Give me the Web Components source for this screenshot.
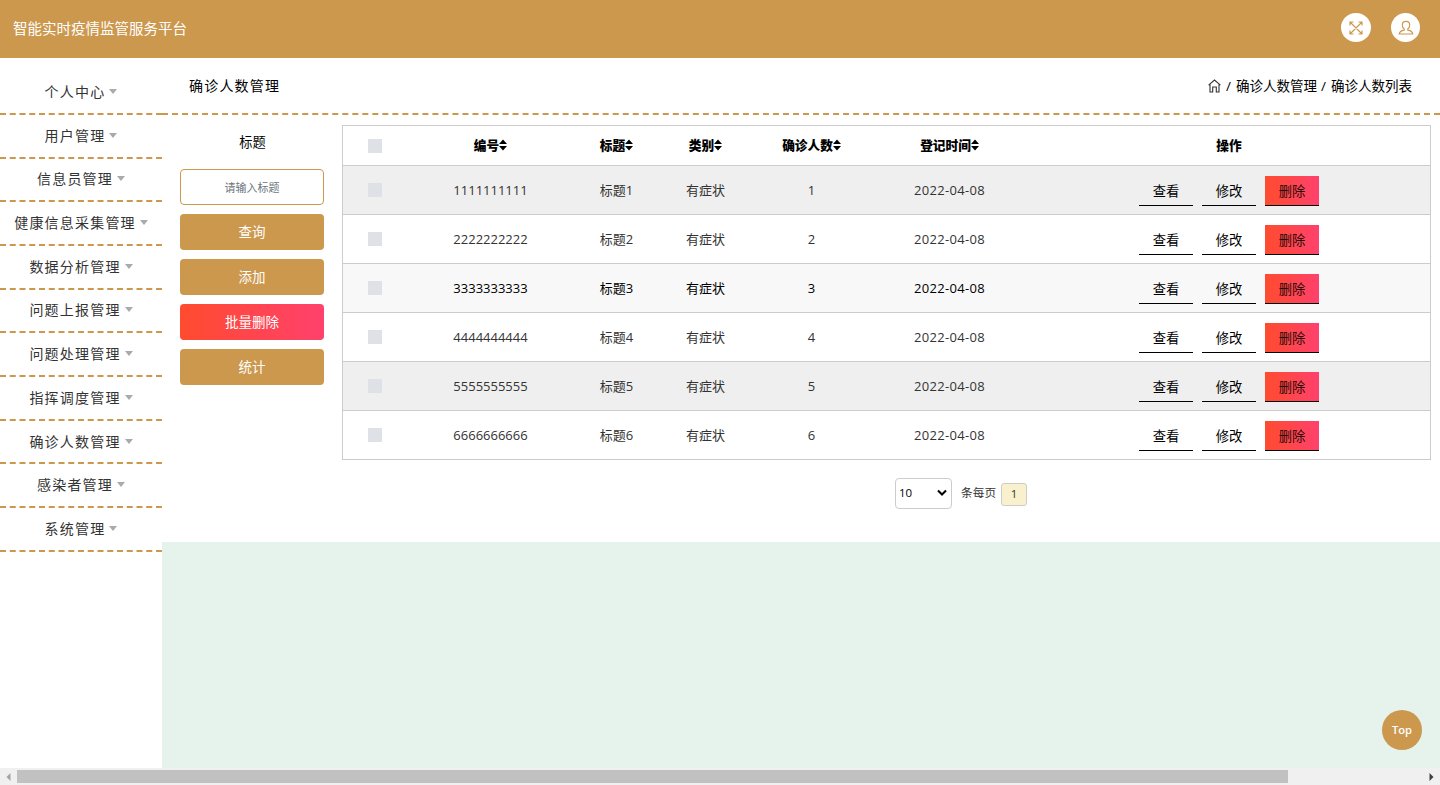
<!DOCTYPE html>
<html lang="zh-CN">
<head>
<meta charset="utf-8">
<title>智能实时疫情监管服务平台</title>
<style>
html,body{margin:0;height:100%;overflow:hidden}
body{font-family:"Open Sans","Noto Sans CJK SC",sans-serif;font-size:13px;color:#333;background:#fff;--gold:#cc984d;--danger:linear-gradient(90deg,#ff4b2f,#ff416c)}
</style>
</head>
<body>
<admin-app></admin-app>
<script>
const define=(name,html)=>customElements.define(name,class extends HTMLElement{
  connectedCallback(){
    if(this.shadowRoot)return;
    const root=this.attachShadow({mode:'open'});
    const t=document.createElement('template');
    t.innerHTML='<style>*{box-sizing:border-box}</style>'+(typeof html==='function'?html(this):html);
    root.append(t.content.cloneNode(true));
  }
});

define('top-bar',`<style>
:host{display:flex;height:58px;flex:none;background:var(--gold);align-items:center;padding:0 20px 0 13px;color:#fff}
h1{margin:0;font-size:14.5px;font-weight:400;line-height:20px;flex:1}
.r{display:flex;gap:20px;margin-top:-3px}
i{width:30px;height:29px;border-radius:50%;background:#fff;display:flex;align-items:center;justify-content:center}
i:last-child{width:29px}
svg{fill:none;stroke:#cc984d;stroke-width:1.15;display:block}
</style><h1>智能实时疫情监管服务平台</h1><div class="r">
<i><svg width="14" height="14" viewBox="0 0 14 14"><path d="M1 4.500V1h3.500M9.500 1H13v3.500M13 9.500V13H9.500M4.500 13H1V9.500M1 1l12 12M13 1L1 13"/></svg></i>
<i><svg width="16" height="16" viewBox="0 0 16 16"><path d="M6.200 8.900C4.900 8 4.300 6.500 4.300 4.900 4.300 2.500 5.800 1.300 8 1.300s3.700 1.200 3.700 3.600c0 1.600-.6 3.100-1.900 4v1.200c2.700.4 4.700 1.400 5 3.900H1.200c.3-2.500 2.300-3.500 5-3.900z"/></svg></i></div>`);

define('nav-item',`<style>
:host{display:flex;height:43.7px;flex:none;box-sizing:border-box;border-bottom:2px dashed var(--gold);align-items:center;justify-content:center;font-size:14px;letter-spacing:1.2px;color:#333;line-height:20px;white-space:nowrap}
i{width:0;height:0;border:4.500px solid transparent;border-width:5px 4.500px 0;border-top-color:#aaa;margin:-1px 0 0 4px}
</style><span><slot></slot></span><i></i>`);

define('side-nav',()=>`<style>
:host{display:flex;flex-direction:column;width:162px;flex:none;padding-top:13.200px;background:#fff}
</style>`+['个人中心','用户管理','信息员管理','健康信息采集管理','数据分析管理','问题上报管理','问题处理管理','指挥调度管理','确诊人数管理','感染者管理','系统管理'].map(x=>`<nav-item>${x}</nav-item>`).join(''));

define('page-heading',`<style>
:host{display:flex;height:57px;flex:none;box-sizing:border-box;background:#fff;border-bottom:2px dashed var(--gold);align-items:center;justify-content:space-between;padding:0 28px 0 27px;color:#000;line-height:20px}
h2{margin:0;font-size:14px;font-weight:400;letter-spacing:1.200px}
nav{display:flex;align-items:center;font-size:13.500px}
svg{fill:none;stroke:#333;stroke-width:1.100;margin-right:5px}
span{margin:0 5px 0 4px}span:first-of-type{margin-left:0}
</style><h2>确诊人数管理</h2><nav><svg width="13" height="14" viewBox="0 0 13 14"><path d="M.6 6.200L6.500 1l5.900 5.200M2 5.500v7.500h2.700V8h3.600v5H11V5.500"/></svg><span>/</span>确诊人数管理<span>/</span>确诊人数列表</nav>`);

define('wide-button',`<style>
:host{display:flex;height:36px;border-radius:4px;background:var(--gold);color:#fff;align-items:center;justify-content:center;font-size:13.500px;line-height:20px}
:host([danger]){background:var(--danger)}
</style><slot></slot>`);

define('filter-panel',`<style>
:host{display:flex;flex-direction:column;width:144px;flex:none;gap:9px}
label{height:35px;text-align:center;line-height:34px;color:#000;font-size:13.200px;padding-left:1px}
.in{height:36px;border:1px solid var(--gold);border-radius:4px;display:flex;align-items:center;justify-content:center;font-size:11px;color:#6c757d;padding-bottom:1px}
</style><label>标题</label><div class="in">请输入标题</div><wide-button>查询</wide-button><wide-button>添加</wide-button><wide-button danger>批量删除</wide-button><wide-button>统计</wide-button>`);

const grid='display:grid;grid-template-columns:64px 166px 86px 92px 120px 156px 403px;align-items:center;justify-items:center;box-sizing:border-box;border-bottom:1px solid #ccc;';
const box='.c{width:14px;height:14px;background:#dee2e6}';

define('table-head',()=>`<style>
:host{${grid}height:40px;color:#000;font-weight:700;font-size:12.700px;line-height:20px}
${box}b{display:flex;align-items:center;margin:-2px 0 0 1px}
svg{fill:#000;margin-top:1px}
</style><i class="c"></i>`+['编号','标题','类别','确诊人数','登记时间'].map(x=>`<b>${x}<svg width="8" height="12" viewBox="0 0 8 12"><path d="M0 5L4 .6 8 5zM0 7h8L4 11.400z"/></svg></b>`).join('')+'<b>操作</b>');

define('table-row',el=>{const n=el.getAttribute('n');return `<style>
:host{${grid}height:49px;line-height:20px;color:#333}
:host(:nth-of-type(4n+1)){background:#efefef}
:host([hover]){background:#f8f8f8;color:#000}
:host(:last-of-type){border-bottom:0}
${box}.c,.t{margin-top:-1px}
.t{padding-left:1px}
.d{letter-spacing:.3px}
.a{display:flex;gap:9px;margin-top:2px;align-self:start;padding-top:8px}
.a span{width:54px;height:30px;border-bottom:1px solid #000;text-align:center;line-height:31px;font-size:13.300px;color:#000;padding-left:1px}
.a .del{background:var(--danger);color:#2a0a0a}
</style><i class="c"></i><span class="t">${n.repeat(10)}</span><span class="t">标题${n}</span><span class="t">有症状</span><span class="t">${n}</span><span class="t d">2022-04-08</span><div class="a"><span>查看</span><span>修改</span><span class="del">删除</span></div>`});

define('data-table',`<style>
:host{display:block;border:1px solid #ccc;width:1089px;height:335px;box-sizing:border-box}
</style><table-head></table-head><table-row n="1"></table-row><table-row n="2"></table-row><table-row n="3" hover></table-row><table-row n="4"></table-row><table-row n="5"></table-row><table-row n="6"></table-row>`);

define('page-controls',`<style>
:host{display:flex;align-items:center;margin:18px 0 0 553px;height:31px;font-size:12px;line-height:18px}
.s{width:57px;height:31px;border:1px solid #ccc;border-radius:4px;display:flex;align-items:center;justify-content:space-between;padding:0 4px 1px 3px;color:#000;font-size:11.500px}
svg{fill:none;stroke:#000;stroke-width:2}
.l{margin:-3px 5px 0 9px;font-size:11.700px}
.p{width:26px;height:23px;margin-top:1px;border:1px solid #ccc;border-radius:3px;background:#f9f0cd;text-align:center;line-height:20px;font-size:11.500px}
</style><div class="s">10<svg width="10" height="8" viewBox="0 0 10 8"><path d="M1 1.500l4 4 4-4"/></svg></div><span class="l">条每页</span><span class="p">1</span>`);

define('scroll-bar',`<style>
:host{display:flex;height:17px;flex:none;background:#f0f0f0;align-items:center}
.a{width:17px;display:flex;justify-content:center}
.t{width:1271px;height:13px;background:#c1c1c1}
.g{flex:1}
</style><span class="a"><svg width="5" height="8"><path d="M4.500 0v8L.5 4z" fill="#a3a3a3"/></svg></span><span class="t"></span><span class="g"></span><span class="a"><svg width="5" height="8"><path d="M.5 0v8l4-4z" fill="#404040"/></svg></span>`);

define('back-top',`<style>
:host{position:absolute;right:18px;bottom:35px;width:40px;height:40px;box-sizing:border-box;border-radius:50%;background:var(--gold);color:#fff;display:flex;align-items:center;justify-content:center;font-size:11.200px;font-weight:600;padding-bottom:1px}
</style><slot></slot>`);

define('admin-app',`<style>
:host{display:flex;flex-direction:column;width:1440px;height:785px;position:relative;overflow:hidden}
.b{display:flex;flex:1;min-height:0}
main{flex:1;background:#e6f3ec;display:flex;flex-direction:column}
.p{height:427px;background:#fff;display:flex;gap:18px;padding:10px 9px 0 18px}
</style><top-bar></top-bar><div class="b"><side-nav></side-nav><main><page-heading></page-heading><div class="p"><filter-panel></filter-panel><div><data-table></data-table><page-controls></page-controls></div></div></main></div><scroll-bar></scroll-bar><back-top>Top</back-top>`);
</script>
</body>
</html>
